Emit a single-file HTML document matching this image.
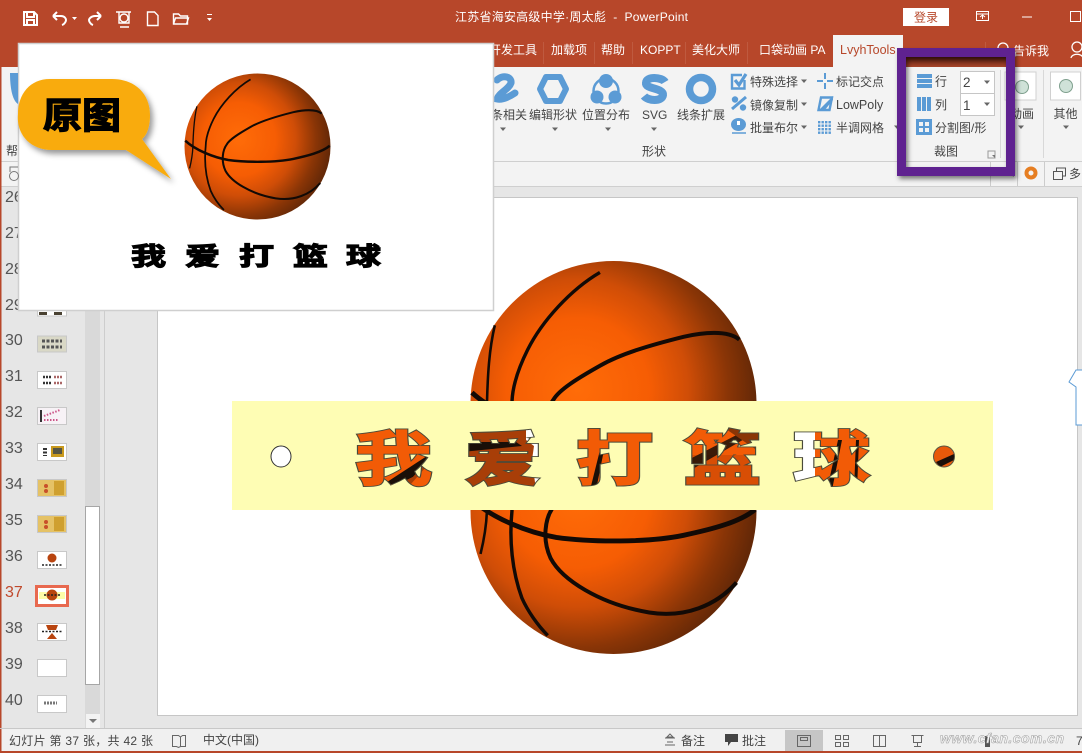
<!DOCTYPE html>
<html><head><meta charset="utf-8"><style>
html,body{margin:0;padding:0;width:1082px;height:753px;overflow:hidden;background:#e6e6e6}
svg{display:block}
text{font-family:"Liberation Sans","Noto Sans CJK SC",sans-serif;font-size:12px;fill:#444}
.t text{fill:#fff;font-size:12px}
.n text{font-size:16px;fill:#555}
.b{fill:#5b9bd5}
.bs{fill:none;stroke:#5b9bd5}
.hv text{font-weight:700;font-family:"Noto Sans CJK SC","Liberation Sans",sans-serif}
</style></head><body>
<svg width="1082" height="753" viewBox="0 0 1082 753" xmlns="http://www.w3.org/2000/svg">
<defs>
<radialGradient id="bg" gradientUnits="userSpaceOnUse" cx="-25" cy="-10" r="125">
<stop offset="0" stop-color="#ff6c08"/><stop offset=".4" stop-color="#f65d04"/><stop offset=".62" stop-color="#cf4d07"/><stop offset=".84" stop-color="#8a3506"/><stop offset="1" stop-color="#642807"/>
</radialGradient>
<linearGradient id="shd" x1="0" y1="0" x2="0" y2="1"><stop offset="0" stop-color="#5a1e10"/><stop offset="1" stop-color="#a8452a"/></linearGradient>
<g id="ball">
<circle r="100" fill="url(#bg)"/>
<g fill="none" stroke="#120a06">
<path stroke-width="3.400" d="M-99-8C-85 5-60 15-40 18.500C-15 22 25 22 49 17C68 13 88 8 99-1"/>
<path stroke-width="2.800" d="M88-45C80-52 62-50 49-47C25-41 5-35-9-27C-25-18-38-10-42-3C-48 5-50 20-44 33C-36 48-10 65 25 71C50 75 72 66 86 50"/>
<path stroke-width="2.400" d="M-9.500-92C-30-80-50-58-60-38C-68-22-71-10-71 0C-73 20-71 42-64 61C-60 70-53 80-46 87"/>
<path stroke-width="1.800" d="M-83-55C-87-38-88-20-88.500 0C-89 12-91 22-93 30"/>
</g></g>
<clipPath id="top"><rect x="400" y="240" width="420" height="161"/></clipPath>
<clipPath id="bot"><rect x="400" y="510" width="420" height="160"/></clipPath>
<pattern id="fillp" patternUnits="userSpaceOnUse" width="1082" height="753">
<rect x="340" y="415" width="540" height="80" fill="#f25b06"/>
<rect x="462" y="420" width="82" height="70" fill="#a83e08"/>
<path d="M526 420h18v26h-4v44h-4l-4-30 2-14-8-6z" fill="#fff"/>
<path d="M462 442h54l6 4-60 6z" fill="#1a0f08"/>
<path d="M384 484L430 454l3 1-20 22-14 7z" fill="#1a0f08"/>
<path d="M398 484l15-7 20-22 0 4-22 25z" fill="#a83e08"/>
<rect x="684" y="455" width="80" height="35" fill="#d84e05"/>
<path d="M684 462l70-36 6 4-76 44z" fill="#1a0f08" opacity=".85"/>
<path d="M720 425h44v30z" fill="#8a3506"/>
<rect x="788" y="420" width="27" height="70" fill="#fff"/>
<path d="M838 440l4 0-10 50-5 0zM856 440l3 0-2 50-3 0z" fill="#1a0f08"/>
<path d="M590 490l10-40 4 0-8 40z" fill="#1a0f08"/>
</pattern>
<pattern id="fillr" patternUnits="userSpaceOnUse" width="1082" height="753">
<rect width="1082" height="753" fill="#e8590a"/>
<path d="M936 462l18-8v6l-14 7z" fill="#1a0f08"/>
</pattern>
<filter id="sh" x="-20%" y="-20%" width="150%" height="150%"><feDropShadow dx="3" dy="4" stdDeviation="3" flood-color="#000" flood-opacity=".4"/></filter>
<filter id="sh2" x="-10%" y="-10%" width="120%" height="120%"><feDropShadow dx="2" dy="3" stdDeviation="2.500" flood-color="#000" flood-opacity=".5"/></filter>
<path id="dd" d="M-3-1.500h6L0 2z" fill="#666"/>
</defs>

<rect width="1082" height="753" fill="#e6e6e6"/>
<rect width="1082" height="67" fill="#b7472a"/>
<rect x="0" y="67" width="1082" height="95" fill="#f3f3f3"/>
<rect x="0" y="161" width="1082" height="1" fill="#cfcfcf"/>
<rect x="0" y="162" width="1082" height="24" fill="#f3f3f3"/>
<rect x="0" y="186" width="1082" height="1" fill="#cfcfcf"/>
<rect x="0" y="0" width="1.500" height="753" fill="#b7472a"/>
<rect x="0" y="751" width="1082" height="2" fill="#b7472a"/>

<!-- title bar -->
<g fill="none" stroke="#fff" stroke-width="2">
<path d="M24 12h10l3 3v10H24z"/><path d="M27 12v5h7v-5M27 25v-5h7v5"/>
<path d="M53 16l4-4M53 16l4 4M53 16h8c4 0 5 3 5 4s-1 4-4 5"/>
<path d="M101 16l-4-4M101 16l-4 4M101 16h-6c-4 0-6 3-6 4s1 4 4 5"/>
</g>
<g fill="none" stroke="#fff" stroke-width="1.400">
<path d="M116 12h15M119 12v11h10v-11M120 27h9"/><circle cx="124" cy="18" r="4"/>
<path d="M147.500 12h7l3.500 3.500v10h-10.500z"/>
<path d="M173.500 24v-10h5l2 2h7v8zM173.500 24l2-6h13l-2 6" />
</g>
<path d="M72 17h5l-2.500 3zM207 18h5l-2.500 3z" fill="#fff"/><rect x="207" y="14" width="5" height="1" fill="#fff"/>
<g class="t"><text x="455" y="21" textLength="233" lengthAdjust="spacing">江苏省海安高级中学·周太彪&#160;&#160;-&#160;&#160;PowerPoint</text></g>
<rect x="903" y="8" width="46" height="18" fill="#fff"/>
<text x="914" y="21.500" style="fill:#b7472a">登录</text>
<g fill="none" stroke="#fff" stroke-width="1"><rect x="976.500" y="11.500" width="12" height="9"/><path d="M976 14h13M982.500 19v-4M980 17l2.500-2 2.500 2"/><path d="M1022 17h10"/><rect x="1070.500" y="11.500" width="10" height="10"/></g>

<!-- tabs -->
<g class="t">
<text x="489" y="54">开发工具</text><text x="551" y="54">加载项</text><text x="601" y="54">帮助</text><text x="640" y="54">KOPPT</text><text x="692" y="54">美化大师</text><text x="759" y="54">口袋动画 PA</text><text x="1013" y="55">告诉我</text>
</g>
<g fill="#bf5a3f"><rect x="543" y="42" width="1" height="22"/><rect x="594" y="42" width="1" height="22"/><rect x="632" y="42" width="1" height="22"/><rect x="685" y="42" width="1" height="22"/><rect x="747" y="42" width="1" height="22"/><rect x="985" y="42" width="1" height="22"/></g>
<rect x="833" y="35" width="70" height="33" fill="#f3f3f3"/>
<text x="840" y="54" style="fill:#b7472a;font-size:12.500px">LvyhTools</text>
<g fill="none" stroke="#fff" stroke-width="1.300"><circle cx="1003" cy="48" r="5"/><path d="M1000 52l-3 4"/><circle cx="1077" cy="47" r="5"/><path d="M1071 58c1-5 11-5 12 0"/></g>

<!-- ribbon icons -->
<path class="bs" stroke-width="7" stroke-linecap="round" d="M497 80c6-6 15-3 14 3c-2 6-12 10-14 16c5 1 12-2 18-6"/>
<path class="bs" stroke-width="6" d="M546 77h14l6 12-6 12h-14l-6-12z" stroke-linejoin="round"/>
<circle class="bs" stroke-width="2.500" cx="606" cy="91" r="12.500"/>
<circle class="b" cx="606" cy="81" r="7"/><circle class="b" cx="597" cy="97" r="6.500"/><circle class="b" cx="615" cy="97" r="6.500"/>
<path class="bs" stroke-width="8" d="M665 82c-3-5-19-6-19 1c-1 6 18 5 17 12c-1 7-15 6-19 1"/>
<circle class="bs" stroke-width="7.500" cx="701" cy="89" r="11.500"/>
<g><use href="#dd" x="503" y="129"/><use href="#dd" x="555" y="129"/><use href="#dd" x="608" y="129"/><use href="#dd" x="654" y="129"/></g>
<text x="491" y="119">条相关</text><text x="529" y="119">编辑形状</text><text x="582" y="119">位置分布</text><text x="642" y="119">SVG</text><text x="677" y="119">线条扩展</text>
<text x="642" y="155.500">形状</text>

<path class="bs" stroke-width="2.400" d="M744.500 80v8.500h-12.500v-13.500h10"/><path class="bs" stroke-width="3.200" d="M735 80l4 5 7-11"/>
<g class="b"><circle cx="735" cy="99.500" r="3.200"/><circle cx="743" cy="107.500" r="3.200"/></g><path class="bs" stroke-width="3" d="M732 109l14-12"/>
<ellipse class="b" cx="738.500" cy="124.500" rx="7.500" ry="6.500"/><rect x="737" y="121" width="3" height="4" fill="#fff"/><path class="bs" stroke-width="1.500" d="M732 133h14"/>
<text x="750" y="86">特殊选择</text><text x="750" y="109.500">镜像复制</text><text x="750" y="132">批量布尔</text>
<use href="#dd" x="804" y="81"/><use href="#dd" x="804" y="104"/><use href="#dd" x="804" y="127"/>
<path class="bs" stroke-width="2" d="M817 81h6M827 81h6M825 73v6M825 83v6"/>
<path class="bs" stroke-width="2.400" d="M821 97.500h11l-2.500 12.500h-11z"/><path class="b" d="M818 111l15-15v4l-9 11z"/>
<g class="b"><rect x="818" y="121" width="2.400" height="2.400"/><rect x="821.500" y="121" width="2.400" height="2.400"/><rect x="825" y="121" width="2.400" height="2.400"/><rect x="828.500" y="121" width="2.400" height="2.400"/><rect x="818" y="124.500" width="2.400" height="2.400"/><rect x="821.500" y="124.500" width="2.400" height="2.400"/><rect x="825" y="124.500" width="2.400" height="2.400"/><rect x="828.500" y="124.500" width="2.400" height="2.400"/><rect x="818" y="128" width="2.400" height="2.400"/><rect x="821.500" y="128" width="2.400" height="2.400"/><rect x="825" y="128" width="2.400" height="2.400"/><rect x="828.500" y="128" width="2.400" height="2.400"/><rect x="818" y="131.500" width="2.400" height="2.400"/><rect x="821.500" y="131.500" width="2.400" height="2.400"/><rect x="825" y="131.500" width="2.400" height="2.400"/><rect x="828.500" y="131.500" width="2.400" height="2.400"/></g>
<text x="836" y="86">标记交点</text><text x="836" y="109" style="font-size:12.500px">LowPoly</text><text x="836" y="132">半调网格</text>
<use href="#dd" x="897" y="127"/>

<!-- crop group -->
<rect x="1000" y="70" width="1" height="88" fill="#d8d8d8"/>
<rect x="1043" y="70" width="1" height="88" fill="#d8d8d8"/>
<g class="b"><rect x="917" y="74" width="15" height="4"/><rect x="917" y="79" width="15" height="4"/><rect x="917" y="84" width="15" height="4"/>
<rect x="917" y="97" width="4" height="14"/><rect x="922" y="97" width="4" height="14"/><rect x="927" y="97" width="4" height="14"/>
<rect x="916" y="119" width="16" height="16"/></g>
<g fill="#f3f3f3"><rect x="919" y="122" width="4" height="4"/><rect x="925" y="122" width="4" height="4"/><rect x="919" y="128" width="4" height="4"/><rect x="925" y="128" width="4" height="4"/></g>
<text x="935" y="85.500">行</text><text x="935" y="109">列</text><text x="935" y="132">分割图/形</text><text x="934" y="155.500">裁图</text>
<rect x="960.500" y="71.500" width="34" height="22" fill="#fff" stroke="#c6c6c6"/><rect x="960.500" y="93.500" width="34" height="22" fill="#fff" stroke="#c6c6c6"/>
<text x="963" y="87" style="font-size:13.500px">2</text><text x="963" y="110" style="font-size:13.500px">1</text><use href="#dd" x="987" y="82"/><use href="#dd" x="987" y="104"/>
<path d="M988 151h7v7h-7z" fill="none" stroke="#999"/><path d="M991 154l4 4v-3h-3z" fill="#777"/>

<rect x="1005" y="72" width="31" height="28" fill="#fff" stroke="#d0d0d0"/>
<circle cx="1022" cy="87" r="6.500" fill="#cfe2d8" stroke="#7fa08e"/>
<text x="1010" y="118">动画</text><use href="#dd" x="1021" y="127"/>
<rect x="1050.500" y="72" width="30" height="28" fill="#fff" stroke="#d0d0d0"/>
<circle cx="1066" cy="86" r="6.500" fill="#cfe2d8" stroke="#7fa08e"/>
<text x="1053.500" y="118">其他</text><use href="#dd" x="1066" y="127"/>

<!-- second bar -->
<rect x="990" y="162" width="1" height="24" fill="#ccc"/><rect x="1017" y="162" width="1" height="24" fill="#ccc"/><rect x="1044" y="162" width="1" height="24" fill="#ccc"/>
<circle cx="1031" cy="173" r="4.500" fill="none" stroke="#e67e22" stroke-width="4"/>
<g fill="none" stroke="#555"><rect x="1053.500" y="171.500" width="9" height="8"/><path d="M1056.500 171v-3h9v8h-3"/></g>
<text x="1069" y="178">多</text>

<!-- left panel -->
<g class="n">
<text x="5" y="202">26</text><text x="5" y="238">27</text><text x="5" y="274">28</text><text x="5" y="310">29</text>
<text x="5" y="345">30</text><text x="5" y="381">31</text><text x="5" y="417">32</text><text x="5" y="453">33</text><text x="5" y="489">34</text><text x="5" y="525">35</text><text x="5" y="561">36</text><text x="5" y="597" style="fill:#c0492c">37</text><text x="5" y="633">38</text><text x="5" y="669">39</text><text x="5" y="705">40</text>
</g>
<rect x="85" y="187" width="15" height="541" fill="#d9d9d9"/>
<rect x="85.500" y="506.500" width="14" height="178" fill="#fff" stroke="#a6a6a6"/>
<rect x="86" y="714" width="14" height="14" fill="#f3f3f3"/><path d="M89 719h8l-4 4z" fill="#777"/>
<rect x="104" y="187" width="1" height="541" fill="#cdcdcd"/>

<!-- thumbs -->
<g stroke="#c8c8c8" fill="#fff">
<rect x="37.500" y="307" width="29" height="9"/>
<rect x="37.500" y="336" width="29" height="16" fill="#d9d8c6"/>
<rect x="37.500" y="371.500" width="29" height="17"/>
<rect x="37.500" y="407.500" width="29" height="17" fill="#f7f2f6"/>
<rect x="37.500" y="443.500" width="29" height="17"/>
<rect x="37.500" y="479.500" width="29" height="17" fill="#e5c266"/>
<rect x="37.500" y="515.500" width="29" height="17" fill="#e5c266"/>
<rect x="37.500" y="551.500" width="29" height="17"/>
<rect x="37.500" y="623.500" width="29" height="17"/>
<rect x="37.500" y="659.500" width="29" height="17"/>
<rect x="37.500" y="695.500" width="29" height="17"/>
</g>
<g fill="#4a4232"><rect x="39" y="312" width="8" height="3"/><rect x="54" y="312" width="8" height="3"/></g>
<path d="M42 341h20M42 347h20" stroke="#555" stroke-width="3" stroke-dasharray="3 1.500"/>
<path d="M43 377h9M43 383h9" stroke="#333" stroke-width="2.500" stroke-dasharray="2 1"/><path d="M54 377h9M54 383h8" stroke="#a66" stroke-width="2.500" stroke-dasharray="2 1"/>
<path d="M41 410v12" stroke="#333" stroke-width="2"/><path d="M44 416l16-6M44 420h14" stroke="#c58" stroke-width="2" stroke-dasharray="1.500 1.500"/>
<rect x="51" y="446" width="13" height="11" fill="#c99a1e"/><rect x="53" y="448" width="9" height="6" fill="#554"/><path d="M45 448v8" stroke="#333" stroke-width="4" stroke-dasharray="2 1.500"/>
<rect x="54" y="481" width="10" height="14" fill="#cfa030"/><circle cx="46" cy="486" r="2" fill="#c8502a"/><circle cx="46" cy="491" r="2" fill="#c8502a"/>
<rect x="54" y="517" width="10" height="14" fill="#cfa030"/><circle cx="46" cy="522" r="2" fill="#c8502a"/><circle cx="46" cy="527" r="2" fill="#c8502a"/>
<circle cx="52" cy="558" r="4.500" fill="#b8440f"/><path d="M42 565h20" stroke="#222" stroke-width="1.500" stroke-dasharray="2 1.500"/>
<rect x="36.500" y="586.500" width="31" height="19" fill="#fff" stroke="#e8694f" stroke-width="3"/>
<rect x="39" y="592" width="26" height="7" fill="#fdfca8"/><circle cx="52" cy="595" r="5.500" fill="#b8440f"/><path d="M44 595h16" stroke="#222" stroke-width="1.500" stroke-dasharray="2 1.500"/>
<path d="M46 625h12l-2 5h-8zM47 639l5-6 5 6z" fill="#b8440f"/><path d="M42 631.500h20" stroke="#222" stroke-width="1.500" stroke-dasharray="2 1.500"/>
<path d="M44 703h13" stroke="#777" stroke-width="3" stroke-dasharray="2 1"/>

<!-- slide -->
<rect x="105" y="187" width="977" height="541" fill="#e6e6e6"/>
<rect x="157.500" y="197.500" width="920" height="518" fill="#fff" stroke="#c6c6c6"/>
<g clip-path="url(#top)"><use href="#ball" transform="translate(613.500,404) scale(1.43,1.43)"/></g>
<g clip-path="url(#bot)"><use href="#ball" transform="translate(613.500,511) scale(1.43,1.43)"/></g>
<rect x="232" y="401" width="761" height="109" fill="#fefdb4"/>
<ellipse cx="281" cy="456.500" rx="10" ry="10.500" fill="#fff" stroke="#333"/>
<ellipse cx="944" cy="456.500" rx="10.500" ry="10.500" fill="url(#fillr)" stroke="#554"/>

<g class="hv">
<g fill="none" stroke="#4a4a3a" stroke-width="3">
<text x="355" y="480" textLength="77" lengthAdjust="spacingAndGlyphs" style="font-size:59px;fill:none">我</text>
<text x="465" y="480" textLength="77" lengthAdjust="spacingAndGlyphs" style="font-size:59px;fill:none">爱</text>
<text x="576" y="480" textLength="77" lengthAdjust="spacingAndGlyphs" style="font-size:59px;fill:none">打</text>
<text x="684" y="480" textLength="77" lengthAdjust="spacingAndGlyphs" style="font-size:59px;fill:none">篮</text>
<text x="793" y="480" textLength="77" lengthAdjust="spacingAndGlyphs" style="font-size:59px;fill:none">球</text>
</g>
<g stroke="url(#fillp)" stroke-width="1.200">
<text x="355" y="480" textLength="77" lengthAdjust="spacingAndGlyphs" style="font-size:59px;fill:url(#fillp)">我</text>
<text x="465" y="480" textLength="77" lengthAdjust="spacingAndGlyphs" style="font-size:59px;fill:url(#fillp)">爱</text>
<text x="576" y="480" textLength="77" lengthAdjust="spacingAndGlyphs" style="font-size:59px;fill:url(#fillp)">打</text>
<text x="684" y="480" textLength="77" lengthAdjust="spacingAndGlyphs" style="font-size:59px;fill:url(#fillp)">篮</text>
<text x="793" y="480" textLength="77" lengthAdjust="spacingAndGlyphs" style="font-size:59px;fill:url(#fillp)">球</text>
</g></g>
<path d="M1082 370h-6l-7 12 7 5v38h6" fill="#fff" stroke="#5b9bd5"/>

<!-- overlay panel -->
<rect x="18.500" y="43.500" width="475" height="267" fill="#fff" stroke="#cfcfcf" stroke-width="1.500"/>
<use href="#ball" transform="translate(257.500,146.500) scale(.73,.73)"/>
<path filter="url(#sh)" d="M50 79h62c22 0 38 14 38 36c0 12-3 20-8 24l29 40-45-29H52c-22 0-36-16-34-36c0-20 12-35 32-35z" fill="#f9ab0c"/>
<g class="hv" stroke="#000" stroke-width="1.400">
<text x="43" y="128" textLength="78" lengthAdjust="spacingAndGlyphs" style="font-size:36px;fill:#000">原图</text>
</g>
<g class="hv" stroke="#000" stroke-width="1.200">
<text x="131" y="265" textLength="35" lengthAdjust="spacingAndGlyphs" style="font-size:25px;fill:#000">我</text>
<text x="185" y="265" textLength="35" lengthAdjust="spacingAndGlyphs" style="font-size:25px;fill:#000">爱</text>
<text x="239" y="265" textLength="35" lengthAdjust="spacingAndGlyphs" style="font-size:25px;fill:#000">打</text>
<text x="293" y="265" textLength="35" lengthAdjust="spacingAndGlyphs" style="font-size:25px;fill:#000">篮</text>
<text x="346" y="265" textLength="35" lengthAdjust="spacingAndGlyphs" style="font-size:25px;fill:#000">球</text>
</g>

<!-- left ribbon remnants -->
<path d="M10 73h8v31c-5-3-8-14-8-31z" fill="#5b9bd5"/>
<text x="6" y="155" style="font-size:12px">帮</text>
<g fill="none" stroke="#777"><circle cx="14" cy="176" r="4.500"/><path d="M10 172v-5h8"/></g>

<!-- purple frame -->
<rect x="906" y="57" width="100" height="10" fill="url(#shd)"/>
<path d="M1006 168l8 8" stroke="#777" stroke-width="2"/>
<rect x="901.500" y="52.500" width="109" height="119" fill="none" stroke="#5e2190" stroke-width="9" filter="url(#sh2)"/>

<!-- status bar -->
<rect x="0" y="728" width="1082" height="1" fill="#c8c8c8"/>
<rect x="1.500" y="729" width="1080.500" height="22" fill="#f0f0f0"/>
<text x="9" y="745" textLength="144" lengthAdjust="spacing">幻灯片 第 37 张，共 42 张</text>
<g fill="none" stroke="#666"><path d="M172.500 735.500h6l2 1.500 2-1.500h3v11h-5l-2 1-2-1h-4z"/><path d="M180.500 737v10"/></g>
<text x="203" y="744">中文(中国)</text>
<path d="M665 738h10M667 742h6M665 745h10M670 734l3 3h-6z" stroke="#666" fill="none"/>
<text x="681" y="745">备注</text>
<path d="M725 734h13v8h-7l-3 4v-4h-3z" fill="#444"/>
<text x="742" y="745">批注</text>
<rect x="785" y="730" width="38" height="21" fill="#c6c6c6"/>
<g fill="none" stroke="#666">
<rect x="797.500" y="735.500" width="13" height="11"/><rect x="800.500" y="737.500" width="7" height="3"/>
<rect x="835.500" y="735.500" width="5" height="4"/><rect x="843.500" y="735.500" width="5" height="4"/><rect x="835.500" y="742.500" width="5" height="4"/><rect x="843.500" y="742.500" width="5" height="4"/>
<path d="M873.500 735.500h12v11h-12zM879.500 735.500v11"/>
<path d="M911.500 735.500h12M913.500 735.500v7h8v-7M917.500 742.500v4M914 746.500h7"/>
</g>
<rect x="985" y="736" width="5" height="11" fill="#555"/>
<text x="940" y="743" textLength="124" lengthAdjust="spacing" style="font:italic bold 14px 'Liberation Sans',sans-serif;fill:#f6f6f6;stroke:#9a9a9a;stroke-width:.5">www.cfan.com.cn</text>
<text x="1076" y="745">7</text>
</svg>
</body></html>
